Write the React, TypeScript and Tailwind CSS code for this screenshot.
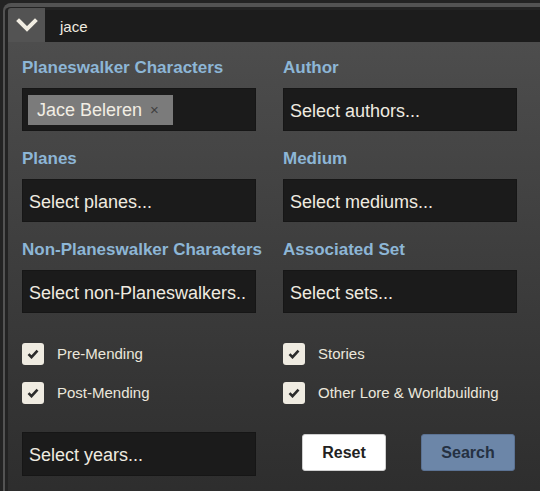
import React from 'react';

function Chevron() {
  return (
    <svg width="22" height="14" viewBox="0 0 22 14" fill="none">
      <path d="M3 3l8 8 8-8" stroke="#f1ede2" strokeWidth="4" strokeLinecap="square" />
    </svg>
  );
}

function Check({ label }: { label: string }) {
  return (
    <div className="flex items-center gap-[13px] h-[22px]">
      <div className="w-[22px] h-[22px] rounded-[3px] bg-[#efebe1] flex items-center justify-center">
        <svg width="12" height="10" viewBox="0 0 12 10">
          <path d="M1.5 5.2l3 3 6-6.5" stroke="#2b2b2b" strokeWidth="2.6" fill="none" />
        </svg>
      </div>
      <span className="text-[15px] text-[#ebe7dc]">{label}</span>
    </div>
  );
}

function Field({ label, placeholder }: { label: string; placeholder: string }) {
  return (
    <div className="flex flex-col">
      <div className="h-[20px] leading-[22px] text-[17px] font-bold text-[#8db6d6] whitespace-nowrap">{label}</div>
      <div className="mt-[11px] h-[43px] bg-[#1b1b1b] border border-[#161616] flex items-center pl-[6px] pt-[3px] text-[18px] text-[#efebe0] whitespace-nowrap overflow-hidden">
        {placeholder}
      </div>
    </div>
  );
}

export default function App() {
  return (
    <div className="w-[540px] h-[491px] overflow-hidden bg-[#232323] font-['Liberation_Sans',Arial,sans-serif]">
      <div className="ml-[3px] mt-[3px] h-[600px] rounded-tl-[8px] border-l-[2px] border-t-[4px] border-[#535353] pl-[3px]">
        <div className="flex items-end h-[35px]">
          <div className="w-[37px] h-[34px] bg-[#535353] rounded-tl-[3px] flex items-center justify-center">
            <Chevron />
          </div>
          <div className="flex-1 h-[32px] bg-[#1c1c1c] flex items-center pl-[15px] pt-[3px] text-[15px] text-[#efebe0]">jace</div>
        </div>
        <div className="h-[460px] bg-linear-to-b from-[#4d4d4d] to-[#2d2d2d] pl-[14px] pt-[15px]">
          <div className="grid grid-cols-[234px_234px] gap-x-[27px] gap-y-[17px]">
            <div className="flex flex-col">
              <div className="h-[20px] leading-[22px] text-[17px] font-bold text-[#8db6d6]">Planeswalker Characters</div>
              <div className="mt-[11px] h-[43px] bg-[#1b1b1b] border border-[#161616] flex items-center pl-[5px]">
                <div className="h-[30px] bg-[#7b7b7b] flex items-center pl-[9px] pr-[14px] pt-[2px] gap-[8px]">
                  <span className="text-[18px] text-[#f1ede4]">Jace Beleren</span>
                  <span className="text-[15px] text-[#3f3f3f]">×</span>
                </div>
              </div>
            </div>
            <Field label="Author" placeholder="Select authors..." />
            <Field label="Planes" placeholder="Select planes..." />
            <Field label="Medium" placeholder="Select mediums..." />
            <Field label="Non-Planeswalker Characters" placeholder="Select non-Planeswalkers.." />
            <Field label="Associated Set" placeholder="Select sets..." />
          </div>
          <div className="grid grid-cols-[234px_234px] gap-x-[27px] gap-y-[17px] mt-[30px]">
            <Check label="Pre-Mending" />
            <Check label="Stories" />
            <Check label="Post-Mending" />
            <Check label="Other Lore & Worldbuilding" />
          </div>
          <div className="grid grid-cols-[234px_234px] gap-x-[27px] mt-[28px]">
            <div className="h-[44px] bg-[#1b1b1b] border border-[#161616] flex items-center pl-[6px] pt-[3px] text-[18px] text-[#efebe0]">
              Select years...
            </div>
            <div className="flex items-start pt-[2px] pl-[19px] gap-[35px]">
              <button className="w-[84px] h-[37px] bg-white border border-[#cfcfcf] rounded-[3px] text-[16px] font-bold text-[#222]">
                Reset
              </button>
              <button className="w-[94px] h-[37px] bg-[#6c86a8] border border-[#5b7293] rounded-[3px] text-[16px] font-bold text-[#253142]">
                Search
              </button>
            </div>
          </div>
        </div>
      </div>
    </div>
  );
}
